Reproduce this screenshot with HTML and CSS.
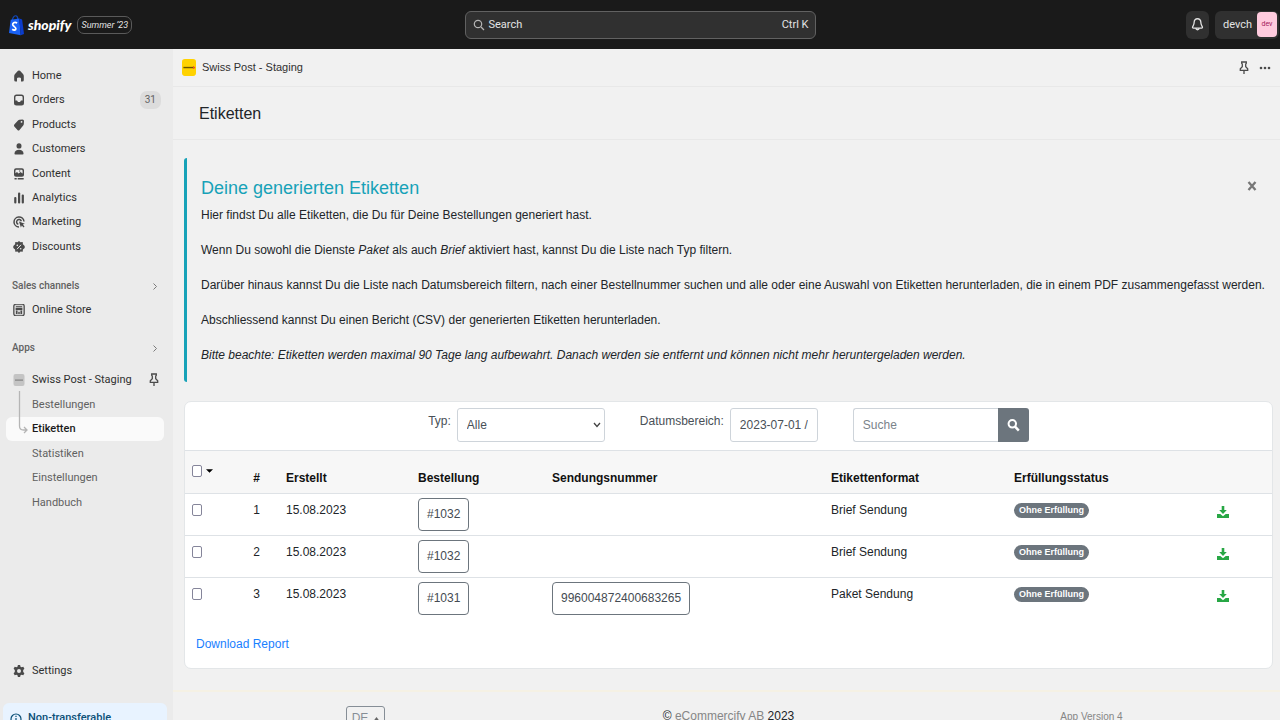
FILE: index.html
```html
<!DOCTYPE html>
<html lang="de">
<head>
<meta charset="utf-8">
<meta name="viewport" content="width=device-width, initial-scale=1">
<title>Etiketten</title>
<link rel="stylesheet" href="styles.css">
</head>
<body>
<header class="topbar">
  <div class="brand">
    <svg class="bag" viewBox="0 0 16 22" aria-hidden="true"><path d="M3.500 6C4 2.500 6 .8 7.700 1.200c1.500.3 1.700 2.500 1.800 4" fill="none" stroke="#1247b5" stroke-width="1.300"/><path d="M1.800 5.500 11 4l1.500 17.800L0 19.500z" fill="#1a62f5"/><path d="m11 4 3 1.200L16 20.500l-3.500 1.300z" fill="#0b3ccc"/><path d="M8.700 8.800C5.500 7.300 3.800 9 4 10.700c.3 2 3.300 2.200 3.300 4.300 0 1.500-2 1.900-3.900.5" fill="none" stroke="#fff" stroke-width="1.900"/></svg>
    <span class="wordmark">shopify</span>
    <span class="edition">Summer ’23</span>
  </div>
  <button class="search" type="button">
    <svg class="i12" viewBox="0 0 12 12" aria-hidden="true"><circle cx="5" cy="5" r="3.700" fill="none" stroke="#b5b5b5" stroke-width="1.200"/><path d="m8 8 3 3" stroke="#b5b5b5" stroke-width="1.200"/></svg>
    <span>Search</span><span class="shortcut">Ctrl K</span>
  </button>
  <div class="account">
    <button class="bell" type="button" aria-label="Notifications"><svg viewBox="0 0 14 16" aria-hidden="true"><path d="M7 1.800c-2.200 0-3.600 1.700-3.600 3.900 0 2.800-.9 3.500-1.600 4.700-.4.800 0 1.500.8 1.500h8.800c.8 0 1.200-.7.800-1.500-.7-1.200-1.600-1.900-1.600-4.700 0-2.200-1.400-3.900-3.600-3.900zM5.200 12c.2 2.200 3.400 2.200 3.600 0" fill="none" stroke="#e3e3e3" stroke-width="1.400"/></svg></button>
    <button class="user" type="button"><span>devch</span><span class="avatar">dev</span></button>
  </div>
</header>
<div class="shell">
<aside class="sidebar">
  <ul class="nav nav-main">
    <li><a href="#"><svg viewBox="0 0 12 12"><path d="M5 .8Q6 0 7 .8L10 4q.8.8.8 2v4q0 1.500-1.500 1.500H8V8.500q0-1-2-1t-2 1v3H2.700Q1.200 11.500 1.200 10V6q0-1.200.8-2z"/></svg>Home</a></li>
    <li><a href="#"><svg viewBox="0 0 12 12"><path fill-rule="evenodd" d="M3.500.5h5Q11 .5 11 3v6q0 2.500-2.500 2.500h-5Q1 11.500 1 9V3Q1 .5 3.500.5zM3.600 2Q2.400 2 2.400 3.200V6.500H4l1 1.500h2l1-1.500h1.600V3.200Q9.600 2 8.400 2z"/></svg>Orders<span class="count">31</span></a></li>
    <li><a href="#"><svg viewBox="0 0 12 12"><path fill-rule="evenodd" d="M6.500.8 9.500.5q1.500 0 1.500 1.500l-.2 3q0 .8-.6 1.500L6.500 11q-1 1-2 0L1.300 7.500q-.7-1 0-2L5 1.500q.6-.6 1.500-.7zM8.500 2a.9.9 0 1 0 .1 1.800A.9.9 0 0 0 8.500 2z"/></svg>Products</a></li>
    <li><a href="#"><svg viewBox="0 0 12 12"><ellipse cx="6" cy="2.900" rx="2.500" ry="2.700"/><path d="M1.500 10Q2.500 6.700 6 6.700T10.500 10q.3 1.500-1 1.500h-7q-1.300 0-1-1.500z"/></svg>Customers</a></li>
    <li><a href="#"><svg viewBox="0 0 12 12"><path fill-rule="evenodd" d="M3 .3h6q2 0 2 2V7q0 1.700-2 1.700H3Q1 8.700 1 7V2.300q0-2 2-2zm-.6 5L4 4l1.500 1.500L7.500 4l2.100 1.500V3q0-1.300-1-1.300H3.400q-1 0-1 1.300zM6 2.500h1.300v1H6z"/><path d="M1.500 10h2.200v1.400H1.500zm3.200 0h6v1.400h-6z"/></svg>Content</a></li>
    <li><a href="#"><svg viewBox="0 0 12 12"><rect x="1.200" y="5" width="2.200" height="6.500" rx="1"/><rect x="5" y=".5" width="2.200" height="11" rx="1"/><rect x="8.700" y="2.500" width="2.200" height="9" rx="1"/></svg>Analytics</a></li>
    <li><a href="#"><svg viewBox="0 0 12 12"><path d="M11 5.500A5 5 0 1 0 6 11M8.300 5.300A2.400 2.400 0 1 0 5.300 8.200" fill="none" stroke="#4a4a4a" stroke-width="1.500"/><path d="m6 5.500 5.800 2.200-2 .9 1.700 2-1 .9-1.700-2-.9 2z"/></svg>Marketing</a></li>
    <li><a href="#"><svg viewBox="0 0 12 12"><path d="m6 0 1.500 1.300 2.200-.2.200 2.200L11.700 5v2l-1.800 1.500-.2 2.300-2.200-.2L6 12l-1.500-1.400-2.200.2-.2-2.300L.3 7V5l1.800-1.700.2-2.200 2.200.2z"/><path d="m4 8.200 4-4.400" stroke="#ebebeb"/><circle cx="4.300" cy="4.400" r=".8" fill="#ebebeb"/><circle cx="7.700" cy="7.700" r=".8" fill="#ebebeb"/></svg>Discounts</a></li>
  </ul>
  <div class="group">
    <button class="group-title" type="button">Sales channels<svg class="chev" viewBox="0 0 6 8"><path d="m1.500 1 3 3-3 3" fill="none" stroke="#7a7a7a"/></svg></button>
    <ul class="nav">
      <li><a href="#"><svg viewBox="0 0 12 12"><rect x=".8" y=".2" width="10.400" height="11.600" rx="2" fill="#cfcfcf" stroke="#4a4a4a" stroke-width="1.200"/><path d="M3 2.200h6v1H3zM2.700 4h6.600v2H2.700zM3 6.500h1.500V10H3zm4.500 0H9V10H7.500zM5.300 8h1.400v2H5.300z"/></svg>Online Store</a></li>
    </ul>
  </div>
  <div class="group group-apps">
    <button class="group-title" type="button">Apps<svg class="chev" viewBox="0 0 6 8"><path d="m1.500 1 3 3-3 3" fill="none" stroke="#7a7a7a"/></svg></button>
    <ul class="nav nav-apps">
      <li><a href="#"><svg viewBox="0 0 12 12"><rect x=".5" width="11" height="12" rx="2" fill="#c4c4c4"/><path d="M2 5.600h8v1H2z" fill="#777"/></svg>Swiss Post - Staging<svg class="pin" viewBox="0 0 10 14"><path d="M2.700 1h4.600v1.300L6.700 3v2.700l2 2v1.600H1.300V7.700l2-2V3l-.6-.7zM5 9.300V13" fill="none" stroke="#4a4a4a" stroke-width="1.300"/></svg></a></li>
      <li class="sub"><a href="#">Bestellungen</a></li>
      <li class="sub active"><a href="#">Etiketten</a><svg class="branch" viewBox="0 0 10 43"><path d="M1.500 0v35q0 4 4 4H9M6 36l3 3-3 3" fill="none" stroke="#b5b5b5" stroke-width="1.300"/></svg></li>
      <li class="sub"><a href="#">Statistiken</a></li>
      <li class="sub"><a href="#">Einstellungen</a></li>
      <li class="sub"><a href="#">Handbuch</a></li>
    </ul>
  </div>
  <ul class="nav nav-foot">
    <li><a href="#"><svg viewBox="0 0 12 12"><path fill-rule="evenodd" d="M4.900 0h2.200l.4 1.700 1.100.6 1.700-.5 1.100 2L10.200 5v2l1.200 1.200-1.100 2-1.700-.5-1.100.6-.4 1.700H4.900l-.4-1.700-1.100-.6-1.700.5-1.100-2L1.800 7V5L.6 3.800l1.100-2 1.700.5 1.100-.6zM6 4a2 2 0 1 0 0 4 2 2 0 0 0 0-4z"/></svg>Settings</a></li>
  </ul>
  <div class="notice"><svg viewBox="0 0 12 12"><circle cx="6" cy="6" r="5" fill="none" stroke="#0b5078" stroke-width="1.200"/><path d="M5.400 5h1.200v4H5.400zm0-2.200h1.200V4H5.400z" fill="#0b5078"/></svg>Non-transferable</div>
</aside>
<main class="main">
  <div class="appbar">
    <svg class="applogo" viewBox="0 0 15 18"><rect width="15" height="18" rx="3" fill="#ffd200"/><path d="M1.500 8.300h10.500v1.500H1.500z" fill="#6b5500"/><path d="M12 7.500h1v1h1v1.200h-1v1h-1z" fill="#f04e23"/></svg>
    <span>Swiss Post - Staging</span>
    <div class="appbar-tools">
      <button type="button" class="plain" aria-label="Pin"><svg class="pin" viewBox="0 0 10 14"><path d="M2.700 1h4.600v1.300L6.700 3v2.700l2 2v1.600H1.300V7.700l2-2V3l-.6-.7zM5 9.300V13" fill="none" stroke="#4a4a4a" stroke-width="1.300"/></svg></button>
      <button type="button" class="plain" aria-label="More"><svg class="dots" viewBox="0 0 12 4"><circle cx="2" cy="2" r="1.300"/><circle cx="6" cy="2" r="1.300"/><circle cx="10" cy="2" r="1.300"/></svg></button>
    </div>
  </div>
  <h1 class="title">Etiketten</h1>
  <section class="callout">
    <button type="button" class="plain close" aria-label="Schliessen"><svg viewBox="0 0 10 10"><path d="m1.500 1 7 8m0-8-7 8" stroke="#777" stroke-width="2.300"/></svg></button>
    <h2>Deine generierten Etiketten</h2>
    <p>Hier findst Du alle Etiketten, die Du für Deine Bestellungen generiert hast.</p>
    <p>Wenn Du sowohl die Dienste <em>Paket</em> als auch <em>Brief</em> aktiviert hast, kannst Du die Liste nach Typ filtern.</p>
    <p>Darüber hinaus kannst Du die Liste nach Datumsbereich filtern, nach einer Bestellnummer suchen und alle oder eine Auswahl von Etiketten herunterladen, die in einem PDF zusammengefasst werden.</p>
    <p>Abschliessend kannst Du einen Bericht (CSV) der generierten Etiketten herunterladen.</p>
    <p><em>Bitte beachte: Etiketten werden maximal 90 Tage lang aufbewahrt. Danach werden sie entfernt und können nicht mehr heruntergeladen werden.</em></p>
  </section>
  <section class="card">
    <form class="filters">
      <div class="field"><label for="typ">Typ:</label><div class="selectbox"><select id="typ"><option>Alle</option></select><svg class="caret" viewBox="0 0 8 6"><path d="m1 1 3 3.500L7 1" fill="none" stroke="#444" stroke-width="1.300"/></svg></div></div>
      <div class="field"><label for="datum">Datumsbereich:</label><input class="date" id="datum" type="text" value="2023-07-01 /"></div>
      <div class="find"><input type="text" placeholder="Suche" aria-label="Suche"><button type="button" aria-label="Suchen"><svg viewBox="0 0 14 14"><circle cx="5.700" cy="5.700" r="4" fill="none" stroke="#fff" stroke-width="2.200"/><path d="m8.700 8.700 4 4.300" stroke="#fff" stroke-width="2.600"/></svg></button></div>
    </form>
    <table class="labels">
      <colgroup><col class="c-check"><col class="c-num"><col class="c-date"><col class="c-order"><col><col class="c-format"><col class="c-status"><col class="c-get"></colgroup>
      <thead><tr><th class="pick"><input type="checkbox" aria-label="Alle auswählen"><svg class="tri" viewBox="0 0 8 4"><path d="M0 0h8L4 4z"/></svg></th><th class="num">#</th><th>Erstellt</th><th>Bestellung</th><th>Sendungsnummer</th><th>Etikettenformat</th><th>Erfüllungsstatus</th><th></th></tr></thead>
      <tbody>
        <tr><td><input type="checkbox" aria-label="Zeile 1"></td><td class="num">1</td><td>15.08.2023</td><td class="boxed"><a class="btn" href="#">#1032</a></td><td></td><td>Brief Sendung</td><td><span class="badge">Ohne Erfüllung</span></td><td class="get"><a href="#" aria-label="Herunterladen"><svg viewBox="0 0 12 12"><path d="M4.700 0h2.600v4h2.500L6 8 2.200 4h2.500z"/><path d="M0 8h3.300L6 10.300 8.700 8H12v4H0z"/></svg></a></td></tr>
        <tr><td><input type="checkbox" aria-label="Zeile 2"></td><td class="num">2</td><td>15.08.2023</td><td class="boxed"><a class="btn" href="#">#1032</a></td><td></td><td>Brief Sendung</td><td><span class="badge">Ohne Erfüllung</span></td><td class="get"><a href="#" aria-label="Herunterladen"><svg viewBox="0 0 12 12"><path d="M4.700 0h2.600v4h2.500L6 8 2.200 4h2.500z"/><path d="M0 8h3.300L6 10.300 8.700 8H12v4H0z"/></svg></a></td></tr>
        <tr><td><input type="checkbox" aria-label="Zeile 3"></td><td class="num">3</td><td>15.08.2023</td><td class="boxed"><a class="btn" href="#">#1031</a></td><td class="boxed"><a class="btn" href="#">996004872400683265</a></td><td>Paket Sendung</td><td><span class="badge">Ohne Erfüllung</span></td><td class="get"><a href="#" aria-label="Herunterladen"><svg viewBox="0 0 12 12"><path d="M4.700 0h2.600v4h2.500L6 8 2.200 4h2.500z"/><path d="M0 8h3.300L6 10.300 8.700 8H12v4H0z"/></svg></a></td></tr>
      </tbody>
    </table>
    <a class="report" href="#">Download Report</a>
  </section>
  <footer class="footer">
    <div><button class="lang" type="button">DE<svg class="up" viewBox="0 0 6 4"><path d="M0 4h6L3 0z"/></svg></button></div>
    <div class="copy">© <a href="#">eCommercify AB</a> 2023</div>
    <div class="version">App Version 4</div>
  </footer>
</main>
</div>
</body>
</html>
```
FILE: styles.css
```css
:root {
  --sans: "Liberation Sans", Arial, sans-serif;
  --ui: Roboto, Inter, sans-serif;
}
* { box-sizing: border-box; }
body { margin: 0; height: 100vh; display: flex; flex-direction: column; overflow: hidden; background: #f1f1f1; color: #212529; font: 12px/17px var(--sans); }
h1, h2, p, ul { margin: 0; padding: 0; font-weight: 400; }
ul { list-style: none; }
a { color: inherit; text-decoration: none; }
button, input, select { font: inherit; color: inherit; margin: 0; }
svg { display: block; flex: none; }
.plain { border: 0; padding: 0; background: none; }

.topbar { flex: none; height: 49px; background: #1a1a1a; color: #e3e3e3; display: grid; grid-template-columns: 1fr 351px 1fr; align-items: center; font: 11px/16px var(--ui); }
.brand { display: flex; align-items: center; padding-left: 9px; }
.bag { width: 15px; height: 22px; }
.wordmark { margin: 0 6px 0 4px; color: #fff; font: italic 900 14px/22px Lato, sans-serif; }
.edition { border: 1px solid #5a5a5a; border-radius: 7px; height: 18px; line-height: 16px; padding: 0 3px; font-size: 9px; font-style: italic; }
.search { height: 28px; border: 1px solid #616161; border-radius: 6px; background: #303030; display: flex; align-items: center; gap: 4px; padding: 0 6px 0 7px; text-align: left; }
.i12 { width: 12px; height: 12px; }
.shortcut { margin-left: auto; }
.account { display: flex; justify-content: flex-end; gap: 6px; padding-right: 1px; }
.bell, .user { height: 28px; border: 0; border-radius: 6px; background: #303030; display: flex; align-items: center; }
.bell { width: 23px; padding: 0; justify-content: center; }
.bell svg { width: 13px; height: 15px; }
.user { padding: 0 2px 0 8px; gap: 5px; }
.avatar { width: 20px; height: 25px; border-radius: 4px; background: #ffcbde; color: #a3195b; font-size: 7px; line-height: 24px; text-align: center; }

.shell { flex: 1; min-height: 0; display: flex; overflow: hidden; }
.sidebar { flex: none; width: 173px; padding: 15px 6px 0; background: #ebebeb; color: #303030; font: 11px/16px var(--ui); }
.nav { display: grid; grid-auto-rows: 1fr; margin-right: -3px; }
.nav-main { height: 195px; }
.nav a { height: 24px; display: flex; align-items: center; gap: 7px; padding: 0 7px; }
.nav svg { width: 12px; height: 12px; fill: #4a4a4a; }
.nav .pin { width: 10px; height: 14px; margin-left: auto; }
.count { margin-left: auto; margin-right: 2px; border-radius: 7px; background: #dcdcdc; color: #616161; padding: 1px 5px; font-size: 10px; }
.group { margin-top: 15px; }
.group-title { width: 100%; height: 24px; padding: 0 9px 0 6px; border: 0; background: none; display: flex; align-items: center; justify-content: space-between; color: #616161; font-size: 10px; font-weight: 500; }
.chev { width: 6px; height: 9px; }
.group-apps { margin-top: 14px; }
.nav-apps { height: 147px; margin-top: 8px; }
.nav-apps a { padding-right: 11px; }
.nav .sub { position: relative; color: #616161; }
.nav .sub a { padding-left: 26px; margin-right: 6px; }
.nav .active a { background: #fafafa; border-radius: 6px; color: #1a1a1a; font-weight: 500; }
.nav .branch { position: absolute; left: 12px; bottom: 8px; width: 10px; height: 43px; }
.nav-foot { margin-top: 144px; }
.notice { margin: 20px 0 0 -3px; height: 90px; border-radius: 6px; background: #e8f3ff; color: #0b5078; display: flex; gap: 6px; padding: 7px 7px; font-weight: 500; }
.notice svg { width: 12px; height: 12px; margin-top: 3px; }

.main { flex: 1; min-width: 0; }
.appbar { height: 38px; border-bottom: 1px solid #e8e8e8; display: flex; align-items: center; gap: 6px; padding: 0 9px; color: #303030; font-size: 11px; }
.applogo { width: 14px; height: 17px; }
.appbar-tools { margin-left: auto; display: flex; align-items: center; gap: 10px; }
.appbar-tools .pin { width: 10px; height: 14px; }
.dots { width: 12px; height: 4px; fill: #4a4a4a; }
.title { height: 53px; border-bottom: 1px solid #e8e8e8; padding-left: 26px; font-size: 16px; line-height: 54px; }
.callout { position: relative; margin: 18px 7px 0 11px; padding: 18px 2px 18px 14px; border-left: 3px solid #17a2b8; border-radius: 3px; }
.callout h2 { color: #17a2b8; font-size: 18px; line-height: 24px; margin-bottom: 7px; }
.callout p { line-height: 17px; margin-bottom: 18px; }
.callout p:last-child { margin-bottom: 0; }
.close { position: absolute; right: 16px; top: 23px; }
.close svg { width: 10px; height: 10px; }

.card { margin: 19px 7px 0 11px; border: 1px solid #e3e6e8; border-radius: 7px; background: #fff; overflow: hidden; }
.filters { height: 48px; display: flex; justify-content: center; gap: 35px; padding-top: 6px; color: #495057; }
.field { display: flex; gap: 6px; }
.field label { padding-top: 5px; }
.filters input, .selectbox select { height: 34px; border: 1px solid #ced4da; border-radius: 3px; background: #fff; padding: 0 9px; }
.selectbox { position: relative; }
.selectbox select { width: 148px; appearance: none; }
.caret { position: absolute; right: 4px; top: 14px; width: 8px; height: 6px; pointer-events: none; }
.filters .date { width: 88px; }
.find { display: flex; }
.find input { width: 145px; border-radius: 3px 0 0 3px; border-right: 0; }
.find input::placeholder { color: #7b838a; opacity: 1; }
.find button { width: 31px; height: 34px; border: 0; border-radius: 0 3px 3px 0; padding: 0 9px; background: #6c757d; }
.find svg { width: 13px; height: 14px; }
.labels { width: 100%; table-layout: fixed; border-collapse: collapse; }
.c-check { width: 49px; }
.c-num { width: 45px; }
.c-date { width: 132px; }
.c-order { width: 134px; }
.c-format { width: 183px; }
.c-status { width: 193px; }
.c-get { width: 72px; }
.labels tr { height: 42px; border-top: 1px solid #dee2e6; }
.labels td, .labels th { padding: 8px 7px 0; text-align: left; vertical-align: top; }
.labels th { padding: 19px 7px 6px; color: #111; font-weight: 700; }
.labels thead { background: #f7f7f7; }
.labels .num { text-align: center; }
.labels input { appearance: none; display: block; width: 10px; height: 12px; margin-top: 2px; border: 1px solid #85859a; border-radius: 2px; background: #fff; }
.labels .pick { display: flex; gap: 4px; padding-top: 12px; }
.tri { width: 7px; height: 4px; margin-top: 6px; }
.labels .boxed { padding-top: 4px; }
.btn { display: inline-block; border: 1px solid #6c757d; border-radius: 4px; padding: 7px 8px; color: #444b52; }
.badge { display: block; width: max-content; margin-top: 1px; border-radius: 8px; background: #6c757d; color: #fff; padding: 0 5px; font-size: 9px; line-height: 15px; font-weight: 700; }
.labels .get { padding: 12px 0 0 17px; }
.get svg { width: 12px; height: 12px; fill: #28a745; }
.report { display: inline-block; margin: 16px 11px 15px; color: #1a80ff; }

.footer { margin-top: 21px; border-top: 2px solid #f5f1e4; display: grid; grid-template-columns: 1fr 1fr 1fr; justify-items: center; padding: 14px 7px 0 11px; }
.lang { height: 26px; border: 1px solid #868e96; border-radius: 3px; background: none; color: #868e96; display: flex; align-items: center; gap: 6px; padding: 0 5px; }
.up { width: 5px; height: 3px; fill: #666; }
.copy { padding-top: 2px; }
.copy a { color: #868686; }
.version { padding-top: 2px; color: #868686; font-size: 10px; }
```
